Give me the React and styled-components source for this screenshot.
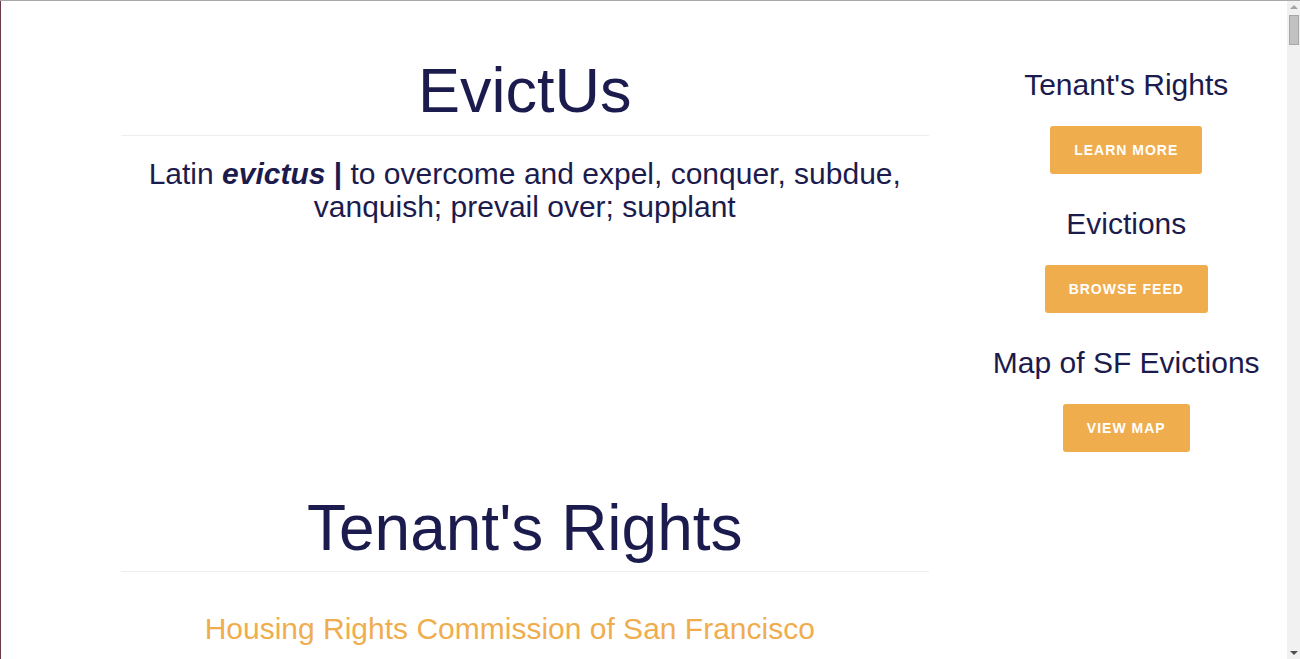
import React from "react";
import styled, { createGlobalStyle } from "styled-components";

const GlobalStyle = createGlobalStyle`
  html, body {
    margin: 0;
    padding: 0;
    background: #ffffff;
  }
  body {
    font-family: "Liberation Sans", Arial, Helvetica, sans-serif;
    color: #1c1b4d;
  }
  * { box-sizing: border-box; }
`;

const Frame = styled.div`
  border-top: 1px solid #a9a9a9;
`;

const Page = styled.div`
  border-left: 1px solid #6b3a44;
  margin-right: 13px;
  display: grid;
  grid-template-columns: 75% 25%;
  min-height: 1400px;
`;

const Main = styled.main`
  padding: 0 37px 0 120px;
`;

const Hero = styled.section`
  min-height: 493px;
  padding-top: 55px;
  text-align: center;
`;

const Section = styled.section`
  text-align: center;
`;

const BigTitle = styled.h1`
  margin: 0;
  font-size: ${(p) => p.$size || 63}px;
  line-height: 69px;
  font-weight: 400;
  color: #1c1b4d;
`;

const Rule = styled.hr`
  border: 0;
  border-top: 1px solid #eeeeee;
  margin: ${(p) => p.$top}px 0 ${(p) => p.$bottom}px;
`;

const Subtitle = styled.p`
  margin: 0;
  font-size: 30px;
  line-height: 33px;
  color: #1c1b4d;
  padding: 0 10px;
`;

const Term = styled.strong`
  font-weight: 700;
`;

const LinkTitle = styled.h2`
  margin: 0;
  padding-right: 30px;
  font-size: 30px;
  line-height: 33px;
  font-weight: 400;
  color: #f0ad4e;
`;

const Sidebar = styled.aside`
  padding-top: 67px;
  display: flex;
  flex-direction: column;
  align-items: center;
  gap: 33px;
  text-align: center;
`;

const SideBlock = styled.div`
  display: flex;
  flex-direction: column;
  align-items: center;
  gap: 25px;
`;

const SideTitle = styled.h3`
  margin: 0;
  font-size: 30px;
  line-height: 33px;
  font-weight: 400;
  color: #1c1b4d;
  white-space: nowrap;
`;

const Button = styled.a`
  display: inline-block;
  height: 48px;
  line-height: 48px;
  padding: 0 24px;
  background: #f0ad4e;
  color: #ffffff;
  border-radius: 3px;
  font-size: 14px;
  font-weight: 700;
  letter-spacing: 1px;
  text-transform: uppercase;
  text-decoration: none;
  cursor: pointer;
`;

const ScrollTrack = styled.div`
  position: fixed;
  top: 1px;
  right: 0;
  bottom: 0;
  width: 13px;
  background: #f1f1f1;
  display: flex;
  flex-direction: column;
  align-items: center;
  justify-content: space-between;
  padding: 4px 0 4px;
`;

const ScrollArrow = styled.div`
  width: 0;
  height: 0;
  border-left: 4px solid transparent;
  border-right: 4px solid transparent;
  ${(p) =>
    p.$up
      ? "border-bottom: 4px solid #a3a3a3;"
      : "border-top: 4px solid #505050;"}
`;

const ScrollThumb = styled.div`
  position: absolute;
  top: 14px;
  left: 2px;
  width: 10px;
  height: 30px;
  background: #c1c1c1;
  border: 1px solid #a8a8a8;
`;

const sideItems = [
  { title: "Tenant's Rights", action: "Learn More" },
  { title: "Evictions", action: "Browse Feed" },
  { title: "Map of SF Evictions", action: "View Map" },
];

export default function App() {
  return (
    <>
      <GlobalStyle />
      <Frame>
        <Page>
          <Main>
            <Hero>
              <BigTitle>EvictUs</BigTitle>
              <Rule $top={10} $bottom={21} />
              <Subtitle>
                Latin <Term><em>evictus</em> |</Term> to overcome and expel, conquer,
                subdue, vanquish; prevail over; supplant
              </Subtitle>
            </Hero>
            <Section>
              <BigTitle $size={64}>Tenant's Rights</BigTitle>
              <Rule $top={8} $bottom={40} />
              <LinkTitle>Housing Rights Commission of San Francisco</LinkTitle>
            </Section>
          </Main>
          <Sidebar>
            {sideItems.map((item) => (
              <SideBlock key={item.title}>
                <SideTitle>{item.title}</SideTitle>
                <Button>{item.action}</Button>
              </SideBlock>
            ))}
          </Sidebar>
        </Page>
      </Frame>
      <ScrollTrack aria-hidden="true">
        <ScrollArrow $up />
        <ScrollThumb />
        <ScrollArrow />
      </ScrollTrack>
    </>
  );
}
